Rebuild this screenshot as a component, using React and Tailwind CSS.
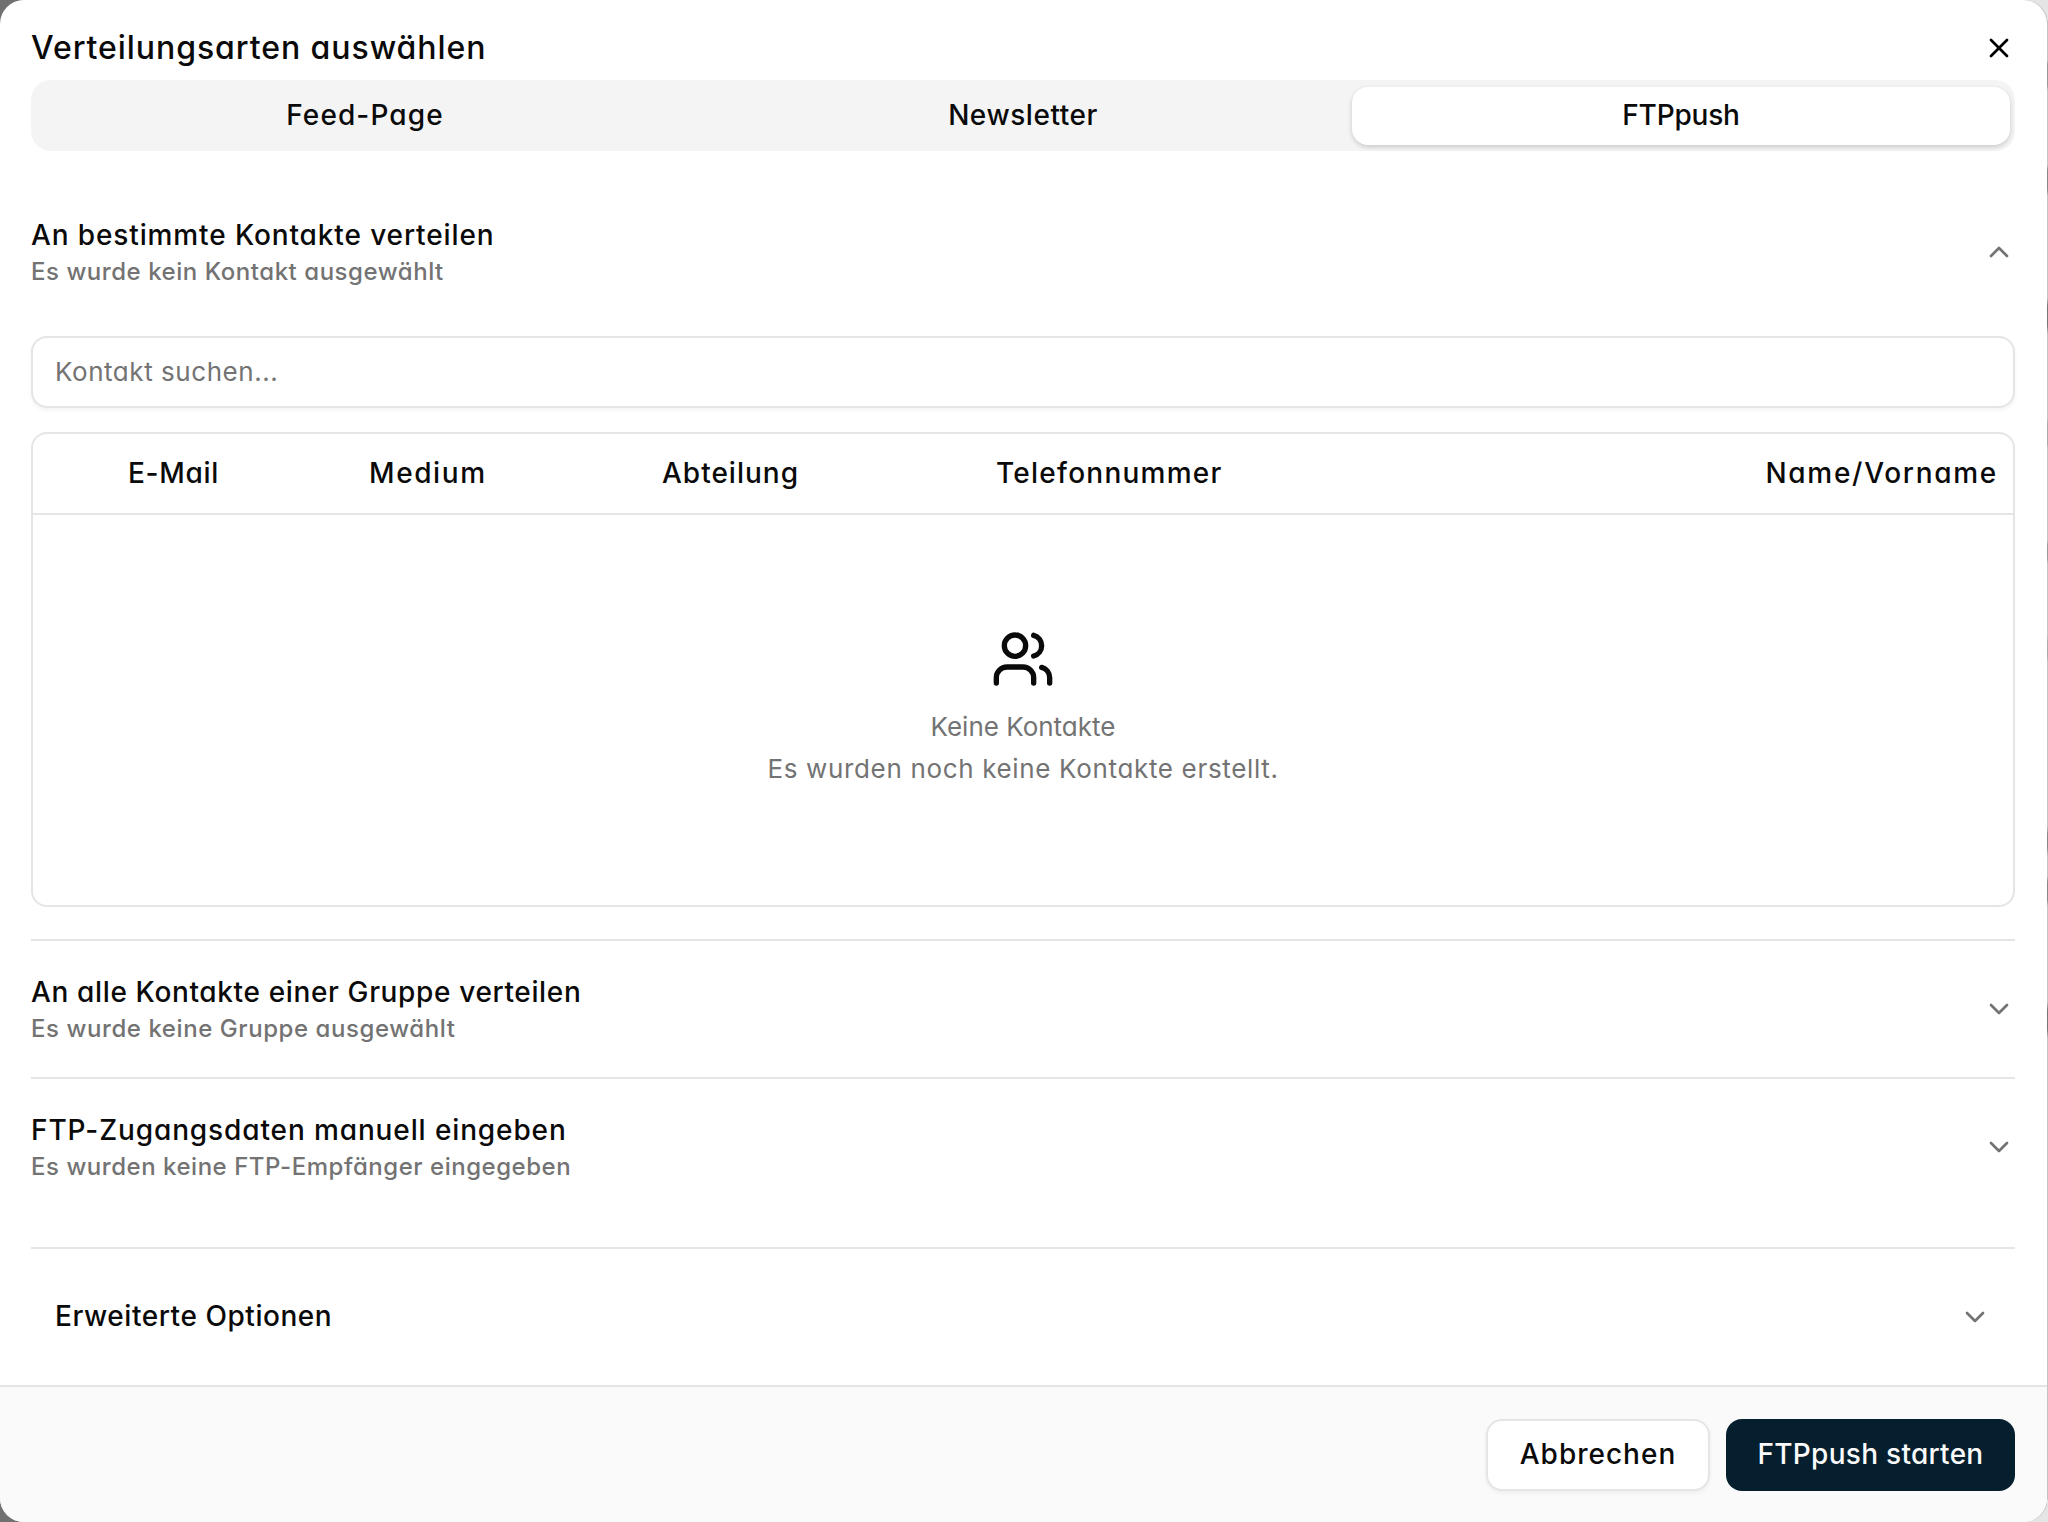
import { ChevronDown, ChevronUp, Users, X } from "lucide-react";

const tabs = [
  { label: "Feed-Page", spacing: "tracking-[1.1px]" },
  { label: "Newsletter", spacing: "tracking-[0.55px]" },
  { label: "FTPpush", spacing: "tracking-[-0.2px]" },
];

function SectionHeader({ title, subtitle, open, titleClass, subtitleClass }) {
  const Icon = open ? ChevronUp : ChevronDown;
  return (
    <button className="flex w-full items-center justify-between text-left font-medium">
      <div>
        <p className={"h-10 text-[28px] leading-[40px] whitespace-nowrap " + titleClass}>{title}</p>
        <p className={"h-8 text-[24px] leading-[33px] whitespace-nowrap text-[#737373] " + subtitleClass}>
          {subtitle}
        </p>
      </div>
      <Icon className="mt-0.5 size-8 text-[#737373]" />
    </button>
  );
}

export default function App() {
  return (
    <div className="flex h-[1522px] w-[2048px] overflow-hidden bg-[linear-gradient(to_right,#707070_50%,#e5e5e5_50%)] font-['Inter','Liberation_Sans',sans-serif] text-[#0a0a0a] [font-feature-settings:'cv11']">
      <div className="flex w-[2047px] flex-col overflow-hidden rounded-[24px] bg-white shadow-[1px_0_0_0_#c4c4c4]">
        <main className="pr-8 pl-[31px]">
          <header className="mt-6 flex h-[47px] items-center justify-between">
            <h2 className="text-[32px] font-medium tracking-[0.94px]">Verteilungsarten auswählen</h2>
            <button>
              <X className="size-8 text-black" />
            </button>
          </header>

          <div className="mt-[9px] grid h-[71px] grid-cols-3 rounded-[20px] bg-[#f4f4f4] px-[5px] pt-[7px] pb-[6px]">
            {tabs.map((tab) => (
              <button
                key={tab.label}
                className={
                  "rounded-2xl pb-[2px] text-[28px] font-medium " +
                  tab.spacing +
                  (tab.label === "FTPpush" ? " bg-white shadow-[0_2px_5px_rgba(0,0,0,0.18)]" : "")
                }
              >
                {tab.label}
              </button>
            ))}
          </div>

          <section className="pt-16 pb-8">
            <SectionHeader
              open
              title="An bestimmte Kontakte verteilen"
              titleClass="tracking-[0.88px]"
              subtitle="Es wurde kein Kontakt ausgewählt"
              subtitleClass="tracking-[0.54px]"
            />

            <input
              type="text"
              placeholder="Kontakt suchen..."
              className="mt-[49px] block h-[72px] w-full rounded-2xl border-2 border-[#e5e5e5] px-[22px] pb-[2px] text-[26px] tracking-[0.55px] shadow-[0_2px_4px_rgba(0,0,0,0.05)] placeholder:text-[#737373]"
            />

            <div className="mt-6 h-[475px] rounded-2xl border-2 border-[#e5e5e5]">
              <div className="grid h-[81px] grid-cols-[241px_293px_334px_1fr] items-center border-b-2 border-[#e5e5e5] pr-[15px] pb-[2px] pl-[95px] text-[28px] font-medium">
                <span className="tracking-[0.7px]">E-Mail</span>
                <span className="tracking-[1.6px]">Medium</span>
                <span className="tracking-[1px]">Abteilung</span>
                <div className="flex justify-between">
                  <span className="tracking-[1.25px]">Telefonnummer</span>
                  <span className="tracking-[1.7px]">Name/Vorname</span>
                </div>
              </div>
              <div className="flex flex-col items-center pt-[112px] text-[26px] leading-[42px] text-[#737373]">
                <Users className="mb-[15px] size-16 text-[#0a0a0a]" />
                <p>Keine Kontakte</p>
                <p className="tracking-[0.66px]">Es wurden noch keine Kontakte erstellt.</p>
              </div>
            </div>
          </section>

          <section className="h-[138px] border-t-2 border-[#e5e5e5] pt-[31px]">
            <SectionHeader
              title="An alle Kontakte einer Gruppe verteilen"
              titleClass="tracking-[0.64px]"
              subtitle="Es wurde keine Gruppe ausgewählt"
              subtitleClass="tracking-[0.57px]"
            />
          </section>

          <section className="h-[170px] border-t-2 border-[#e5e5e5] pt-[31px]">
            <SectionHeader
              title="FTP-Zugangsdaten manuell eingeben"
              titleClass="tracking-[0.88px]"
              subtitle="Es wurden keine FTP-Empfänger eingegeben"
              subtitleClass="tracking-[0.53px]"
            />
          </section>

          <button className="flex h-[138px] w-full items-center justify-between border-t-2 border-[#e5e5e5] px-6">
            <span className="pb-[2px] text-[28px] font-medium tracking-[0.55px]">Erweiterte Optionen</span>
            <ChevronDown className="size-8 text-[#737373]" />
          </button>
        </main>

        <footer className="flex grow items-start justify-end gap-4 border-t-2 border-[#e5e5e5] bg-[#fafafa] pt-8 pr-8 text-[28px] font-medium">
          <button className="h-[72px] w-[224px] rounded-2xl border-2 border-[#e5e5e5] bg-white pb-[2px] tracking-[1px] shadow-[0_2px_4px_rgba(0,0,0,0.05)]">
            Abbrechen
          </button>
          <button className="h-[72px] w-[289px] rounded-2xl bg-[#051f2f] pb-[2px] tracking-[0.28px] text-[#fafafa]">
            FTPpush starten
          </button>
        </footer>
      </div>
      {/* sliver of the page behind the dialog */}
      <div className="h-full w-px bg-[linear-gradient(#e5e5e5_20px,#c4c4c4_20px_60px,#999_64px_86px,#c4c4c4_90px_165px,#888_170px_190px,#c4c4c4_196px_298px,#777_306px_326px,#c4c4c4_334px_418px,#aaa_424px_444px,#c4c4c4_448px_540px,#999_546px_558px,#c4c4c4_564px_636px,#aaa_642px_656px,#c4c4c4_662px_826px,#888_834px_848px,#c4c4c4_856px_876px,#888_882px_900px,#c4c4c4_906px_1002px,#777_1010px_1030px,#c4c4c4_1038px_1500px,#e5e5e5_1500px)]" />
    </div>
  );
}
